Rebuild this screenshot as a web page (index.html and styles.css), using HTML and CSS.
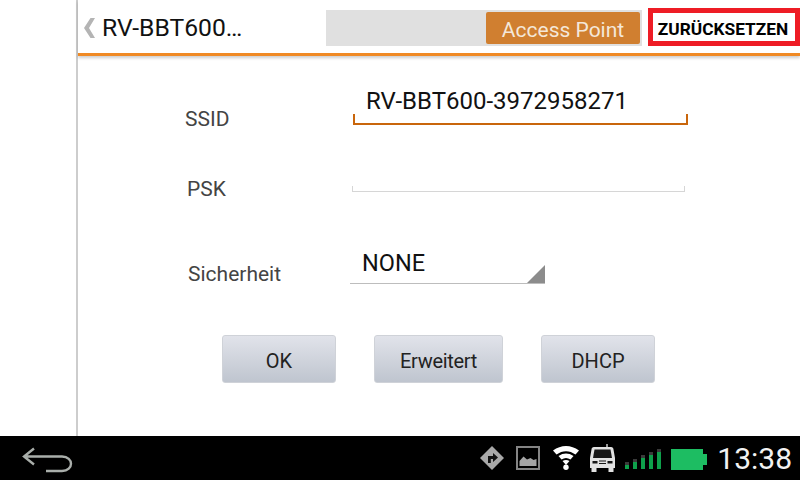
FILE: index.html
```html
<!DOCTYPE html>
<html lang="de">
<head>
    <meta charset="UTF-8">
    <meta name="viewport" content="width=device-width, initial-scale=1.0">
    <title>RV-BBT600</title>
    <link rel="stylesheet" href="styles.css">
</head>
<body>

    <div class="screen">
        <div class="side"></div>

        <div class="panel">
            <div class="header">
                <svg class="back" width="13" height="22" viewBox="0 0 13 22"><path d="M12 1H7.500L1 11l6.500 10H12L6 11z" fill="#b4b4b4"/></svg>
                <h2 class="title">RV-BBT600…</h2>
                <div class="mode">
                    <span class="mode-btn">Access Point</span>
                </div>
                <div class="reset">ZURÜCKSETZEN</div>
            </div>

            <div class="form">
                <div class="row row-ssid">
                    <span class="label">SSID</span>
                    <div class="field active">RV-BBT600-3972958271</div>
                </div>
                <div class="row row-psk">
                    <span class="label">PSK</span>
                    <div class="field"></div>
                </div>
                <div class="row row-sec">
                    <span class="label">Sicherheit</span>
                    <div class="select">NONE</div>
                </div>
                <div class="buttons">
                    <button class="btn btn-ok">OK</button>
                    <button class="btn btn-more">Erweitert</button>
                    <button class="btn btn-dhcp">DHCP</button>
                </div>
            </div>
        </div>
    </div>

    <div class="statusbar">
        <svg class="nav-back" width="52" height="28" viewBox="0 0 52 28">
            <path d="M12 2.500 2 10.500l10 8M2.500 10.500H40c12 0 12 14.500 0 14.500H24" fill="none" stroke="#a9aeaa" stroke-width="2.400"/>
        </svg>
        <div class="icons">
            <svg class="ic-nav" width="24" height="24" viewBox="0 0 24 24"><path d="M12 0 24 12 12 24 0 12z" fill="#a8a8a8"/><path d="M8 17v-7h5V7l5 4.500-5 4.500v-3h-2.200v4z" fill="#111"/></svg>
            <svg class="ic-pic" width="24" height="24" viewBox="0 0 24 24"><rect x="1" y="1" width="22" height="22" fill="none" stroke="#858585" stroke-width="2"/><path d="M3.500 20v-5l4-4.500 3.500 3 3.500-1.500 3 2 3-1v7z" fill="#a5a5a5"/></svg>
            <svg class="ic-wifi" width="26" height="24" viewBox="0 0 26 24"><path d="M0 4.500C8-1.500 18-1.500 26 4.500L22.500 8.500C16.500 4 9.500 4 3.500 8.500z" fill="#fff"/><path d="M5.500 10c5-3.300 10-3.300 15 0l-3 3.500c-3-2-6-2-9 0z" fill="#fff"/><path d="M9.500 15c2.300-1.200 4.700-1.200 7 0l-3.500 4z" fill="#fff"/><circle cx="13" cy="21.300" r="2.700" fill="#fff"/></svg>
            <svg class="ic-bus" width="27" height="28" viewBox="0 0 27 28"><path d="M18 0v4" stroke="#ccc" stroke-width="1.500"/><path d="M5 3h17c1.500 0 2.500 1 2.500 2.500L26 14v10H1V14l1.500-8.500C2.500 4 3.500 3 5 3z" fill="#e2e2e2"/><path d="M5.500 5.500h16l1.500 8.500H4z" fill="#161616"/><path d="M3.500 17h5v2.500h-5zM18.500 17h5v2.500h-5zM10 16.500h7v1h-7zM10 19h7v1h-7z" fill="#161616"/><rect x="2.500" y="24" width="5" height="4" fill="#e2e2e2"/><rect x="19.500" y="24" width="5" height="4" fill="#e2e2e2"/></svg>
            <div class="signal">
                <i class="s1"></i><i class="s2"></i><i class="s3"></i><i class="s4"></i><i class="s5"></i>
            </div>
            <div class="battery"></div>
        </div>
        <span class="clock">13:38</span>
    </div>

</body>
</html>
```

FILE: styles.css
```css
*{
    margin: 0;
    padding: 0;
    box-sizing: border-box;
}

body{
    width: 800px;
    height: 480px;
    overflow: hidden;
    display: flex;
    flex-direction: column;
    background-color: #fff;
    font-family: Roboto, "Liberation Sans", sans-serif;
}

.screen{
    display: flex;
    height: 436px;
}

.side{
    width: 78px;
    border-right: 2px solid #cdcdcd;
}

.panel{
    flex: 1;
    display: flex;
    flex-direction: column;
}

/* header */

.header{
    display: flex;
    align-items: flex-start;
    height: 56px;
    border-bottom: 3px solid #f08a24;
    box-shadow: 0 2px 3px rgba(0, 0, 0, 0.2);
}

.back{
    margin: 17px 0 0 5px;
}

.title{
    width: 224px;
    margin: 14px 0 0 6px;
    font-size: 24.700px;
    line-height: 28px;
    font-weight: 400;
    color: #111;
}

.mode{
    display: flex;
    justify-content: flex-end;
    width: 316px;
    height: 36px;
    margin-top: 10px;
    padding: 2px;
    background-color: #e0e0e0;
}

.mode-btn{
    width: 154px;
    height: 32px;
    line-height: 36px;
    text-align: center;
    font-size: 21px;
    color: #f4e7d9;
    background-color: #d07f30;
    border-radius: 2px;
}

.reset{
    width: 152px;
    height: 38px;
    margin: 8px 0 0 6px;
    border: 5px solid #ee1c25;
    padding-right: 2px;
    font-size: 17.300px;
    line-height: 32px;
    font-weight: 700;
    text-align: center;
    color: #000;
}

/* form */

.form{
    display: flex;
    flex-direction: column;
    padding-top: 31px;
}

.row{
    display: flex;
}

.label{
    font-size: 21px;
    color: #444;
}

.row-ssid{
    height: 38px;
    padding-left: 107px;
    align-items: flex-end;
}

.row-ssid .label{
    width: 168px;
    margin-bottom: -6px;
}

.row-psk{
    height: 67px;
    padding-left: 109px;
    align-items: flex-end;
}

.row-psk .label{
    width: 165px;
    margin-bottom: -9px;
}

.row-sec{
    height: 92px;
    padding-left: 110px;
    align-items: flex-end;
}

.row-sec .label{
    width: 162px;
    margin-bottom: -2px;
}

.field{
    width: 333px;
    height: 6px;
    border: 1px solid #d6d6d6;
    border-top: none;
}

.field.active{
    display: flex;
    align-items: flex-end;
    width: 335px;
    height: 6px;
    border: 2px solid #c9660c;
    border-top: none;
    padding: 0 0 9px 11px;
    font-size: 24px;
    line-height: 26px;
    color: #111;
    white-space: nowrap;
}

.select{
    position: relative;
    width: 195px;
    height: 36px;
    border-bottom: 1px solid #bdbdbd;
    padding: 2px 0 0 12px;
    font-size: 23.500px;
    line-height: 26px;
    color: #111;
}

.select::after{
    content: "";
    position: absolute;
    right: 0;
    bottom: 0;
    border-style: solid;
    border-width: 0 0 18px 18px;
    border-color: transparent transparent #8c8c8c transparent;
}

.buttons{
    display: flex;
    padding: 51px 0 0 144px;
}

.btn{
    height: 48px;
    padding-top: 3px;
    font-family: inherit;
    font-size: 20px;
    color: #222;
    background: linear-gradient(#e1e3ea, #bfc5cf);
    border: 1px solid #cfd2d8;
    border-radius: 3px;
}

.btn-ok{
    width: 114px;
}

.btn-more{
    width: 129px;
    margin-left: 38px;
    letter-spacing: -0.300px;
}

.btn-dhcp{
    width: 114px;
    margin-left: 38px;
}

/* status bar */

.statusbar{
    display: flex;
    align-items: center;
    height: 44px;
    background-color: #000;
}

.nav-back{
    margin: 4px 0 0 22px;
}

.icons{
    display: flex;
    align-items: center;
    margin-left: auto;
}

.ic-pic{
    margin-left: 12px;
}

.ic-wifi{
    margin-left: 13px;
}

.ic-bus{
    margin-left: 10px;
}

.signal{
    display: flex;
    align-items: flex-end;
    gap: 4px;
    height: 20px;
    margin: 2px 0 0 9px;
}

.signal i{
    width: 4px;
    background-color: #0ea04b;
    border-top: 3px solid #3a3a3a;
}

.s1{ height: 7px; }
.s2{ height: 10px; }
.s3{ height: 14px; }
.s4{ height: 17px; }
.s5{ height: 20px; }

.battery{
    position: relative;
    width: 32px;
    height: 21px;
    margin: 2px 4px 0 10px;
    background-color: #1dbd62;
}

.battery::after{
    content: "";
    position: absolute;
    left: 32px;
    top: 5px;
    width: 4px;
    height: 11px;
    background-color: #1dbd62;
}

.clock{
    margin: 0 8px 0 10px;
    font-size: 30px;
    color: #f2f2f2;
}
```
